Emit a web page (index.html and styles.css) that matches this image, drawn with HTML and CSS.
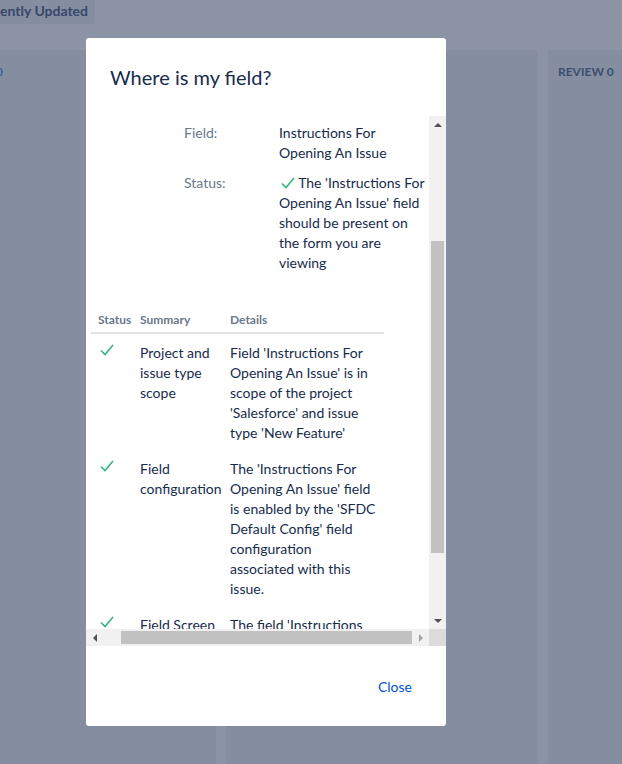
FILE: index.html
```html
<!DOCTYPE html>
<html lang="en">
<head>
    <meta charset="UTF-8">
    <meta name="viewport" content="width=device-width, initial-scale=1.0">
    <title>Where is my field?</title>
    <link rel="stylesheet" href="styles.css">
</head>
<body>
    <div class="topbar">
        <span class="quick-filter">ently Updated</span>
    </div>
    <div class="board">
        <div class="column first">
            <div class="column-title"><span class="count">0</span></div>
        </div>
        <div class="column"></div>
        <div class="column">
            <div class="column-title">REVIEW 0</div>
        </div>
    </div>

    <!-- dialog over the board -->
    <div class="dialog">
        <h2 class="dialog-title">Where is my field?</h2>
        <div class="scroll-box">
            <div class="scroll-view">
                <div class="field-info">
                    <div class="info-label">Field:</div>
                    <div class="info-value">Instructions For Opening An Issue</div>
                    <div class="info-label">Status:</div>
                    <div class="info-value"><svg class="tick inline" viewBox="0 0 14 12"><path d="M1 6.5 L5 10.5 L13 1"/></svg> The 'Instructions For Opening An Issue' field should be present on the form you are viewing</div>
                </div>
                <table class="checks">
                    <colgroup>
                        <col class="col-status">
                        <col class="col-summary">
                        <col class="col-details">
                    </colgroup>
                    <tr>
                        <th>Status</th>
                        <th>Summary</th>
                        <th>Details</th>
                    </tr>
                    <tr>
                        <td><svg class="tick" viewBox="0 0 14 12"><path d="M1 6.5 L5 10.5 L13 1"/></svg></td>
                        <td>Project and issue type scope</td>
                        <td>Field 'Instructions For Opening An Issue' is in scope of the project 'Salesforce' and issue type 'New Feature'</td>
                    </tr>
                    <tr>
                        <td><svg class="tick" viewBox="0 0 14 12"><path d="M1 6.5 L5 10.5 L13 1"/></svg></td>
                        <td>Field configuration</td>
                        <td>The 'Instructions For Opening An Issue' field is enabled by the 'SFDC Default Config' field configuration associated with this issue.</td>
                    </tr>
                    <tr>
                        <td><svg class="tick" viewBox="0 0 14 12"><path d="M1 6.5 L5 10.5 L13 1"/></svg></td>
                        <td>Field Screen</td>
                        <td>The field 'Instructions For Opening An Issue' is present on the screen</td>
                    </tr>
                </table>
            </div>
            <div class="vscroll">
                <div class="sb-btn"><span class="arrow up"></span></div>
                <div class="sb-track v"><div class="sb-thumb v"></div></div>
                <div class="sb-btn"><span class="arrow down"></span></div>
            </div>
            <div class="hscroll">
                <div class="sb-btn"><span class="arrow left"></span></div>
                <div class="sb-track h"><div class="sb-thumb h"></div></div>
                <div class="sb-btn"><span class="arrow right"></span></div>
            </div>
            <div class="sb-corner"></div>
        </div>
        <div class="dialog-footer">
            <a href="#" class="close-link">Close</a>
        </div>
    </div>
</body>
</html>
```

FILE: styles.css
```css
body {
    margin: 0;
    height: 764px;
    overflow: hidden;
    background-color: #8b93a5;
    font-family: Lato, "Liberation Sans", sans-serif;
    color: #172b4d;
}
.topbar {
    height: 50px;
}
.quick-filter {
    display: inline-block;
    height: 24px;
    width: 95px;
    box-sizing: border-box;
    padding: 1px 0 0 0;
    background-color: #858ea1;
    border-radius: 0 0 3px 0;
    color: #36466a;
    font-size: 14px;
    font-weight: 700;
    line-height: 20px;
}
.board {
    display: flex;
    gap: 10px;
}
.column {
    width: 312px;
    height: 720px;
    flex-shrink: 0;
    background-color: #858ea0;
    border-radius: 3px;
}
.column.first {
    width: 216px;
    border-radius: 0 3px 3px 0;
}
.column-title {
    padding: 14px 10px;
    font-size: 12px;
    font-weight: 700;
    color: #3d4d6d;
}
.column.first .column-title {
    padding-left: 0;
}
.count {
    margin-left: -4px;
    color: #3f5e9a;
}

.dialog {
    position: absolute;
    left: 86px;
    top: 38px;
    width: 360px;
    height: 688px;
    background-color: #fff;
    border-radius: 3px;
    display: flex;
    flex-direction: column;
}
.dialog-title {
    margin: 0;
    height: 78px;
    box-sizing: border-box;
    padding: 27px 24px 0;
    font-size: 20px;
    font-weight: 400;
    line-height: 24px;
    color: #172b4d;
}
.scroll-box {
    display: grid;
    grid-template-columns: 343px 17px;
    grid-template-rows: 513px 17px;
}
.scroll-view {
    overflow: hidden;
    padding-top: 7px;
    font-size: 14px;
    line-height: 20px;
}
.field-info {
    display: grid;
    grid-template-columns: 95px 150px;
    row-gap: 10px;
    margin-left: 98px;
}
.info-label {
    color: #6b778c;
}
.tick {
    width: 14px;
    height: 12px;
    display: block;
    margin: 1px 0 0 2px;
}
.tick path {
    fill: none;
    stroke: #36b37e;
    stroke-width: 1.6;
}
.tick.inline {
    display: inline-block;
    vertical-align: -1px;
    margin: 0 0 0 2px;
}
.checks {
    margin: 35px 0 0 5px;
    border-collapse: collapse;
    table-layout: fixed;
    width: 293px;
}
.col-status {
    width: 42px;
}
.col-summary {
    width: 90px;
}
.col-details {
    width: 161px;
}
.checks th {
    text-align: left;
    font-size: 12px;
    font-weight: 700;
    line-height: 16px;
    color: #6b778c;
    padding: 4px 0 4px 7px;
    border-bottom: 2px solid #dfe1e6;
}
.checks td {
    vertical-align: top;
    padding: 9px 4px 7px 7px;
}
.checks td:last-child {
    padding-right: 8px;
}

.vscroll {
    display: flex;
    flex-direction: column;
    background-color: #f1f1f1;
}
.hscroll {
    display: flex;
    background-color: #f1f1f1;
}
.sb-btn {
    width: 17px;
    height: 17px;
    flex-shrink: 0;
    display: flex;
    align-items: center;
    justify-content: center;
}
.sb-track {
    flex: 1;
}
.sb-track.v {
    padding-top: 108px;
}
.sb-track.h {
    padding-left: 18px;
    display: flex;
}
.sb-thumb {
    background-color: #c1c1c1;
}
.sb-thumb.v {
    height: 312px;
    margin: 0 2px;
}
.sb-thumb.h {
    width: 291px;
    height: 13px;
    margin: 2px 0;
}
.sb-corner {
    background-color: #dcdcdc;
}
.arrow {
    width: 0;
    height: 0;
    border: 4px solid transparent;
}
.arrow.up {
    border-bottom: 4px solid #505050;
    border-top-width: 0;
}
.arrow.down {
    border-top: 4px solid #505050;
    border-bottom-width: 0;
}
.arrow.left {
    border-right: 4px solid #505050;
    border-left-width: 0;
}
.arrow.right {
    border-left: 4px solid #a3a3a3;
    border-right-width: 0;
}

.dialog-footer {
    flex: 1;
    display: flex;
    justify-content: flex-end;
    padding: 31px 34px 0 0;
    font-size: 14px;
    line-height: 20px;
}
.close-link {
    color: #0052cc;
    text-decoration: none;
}
```
